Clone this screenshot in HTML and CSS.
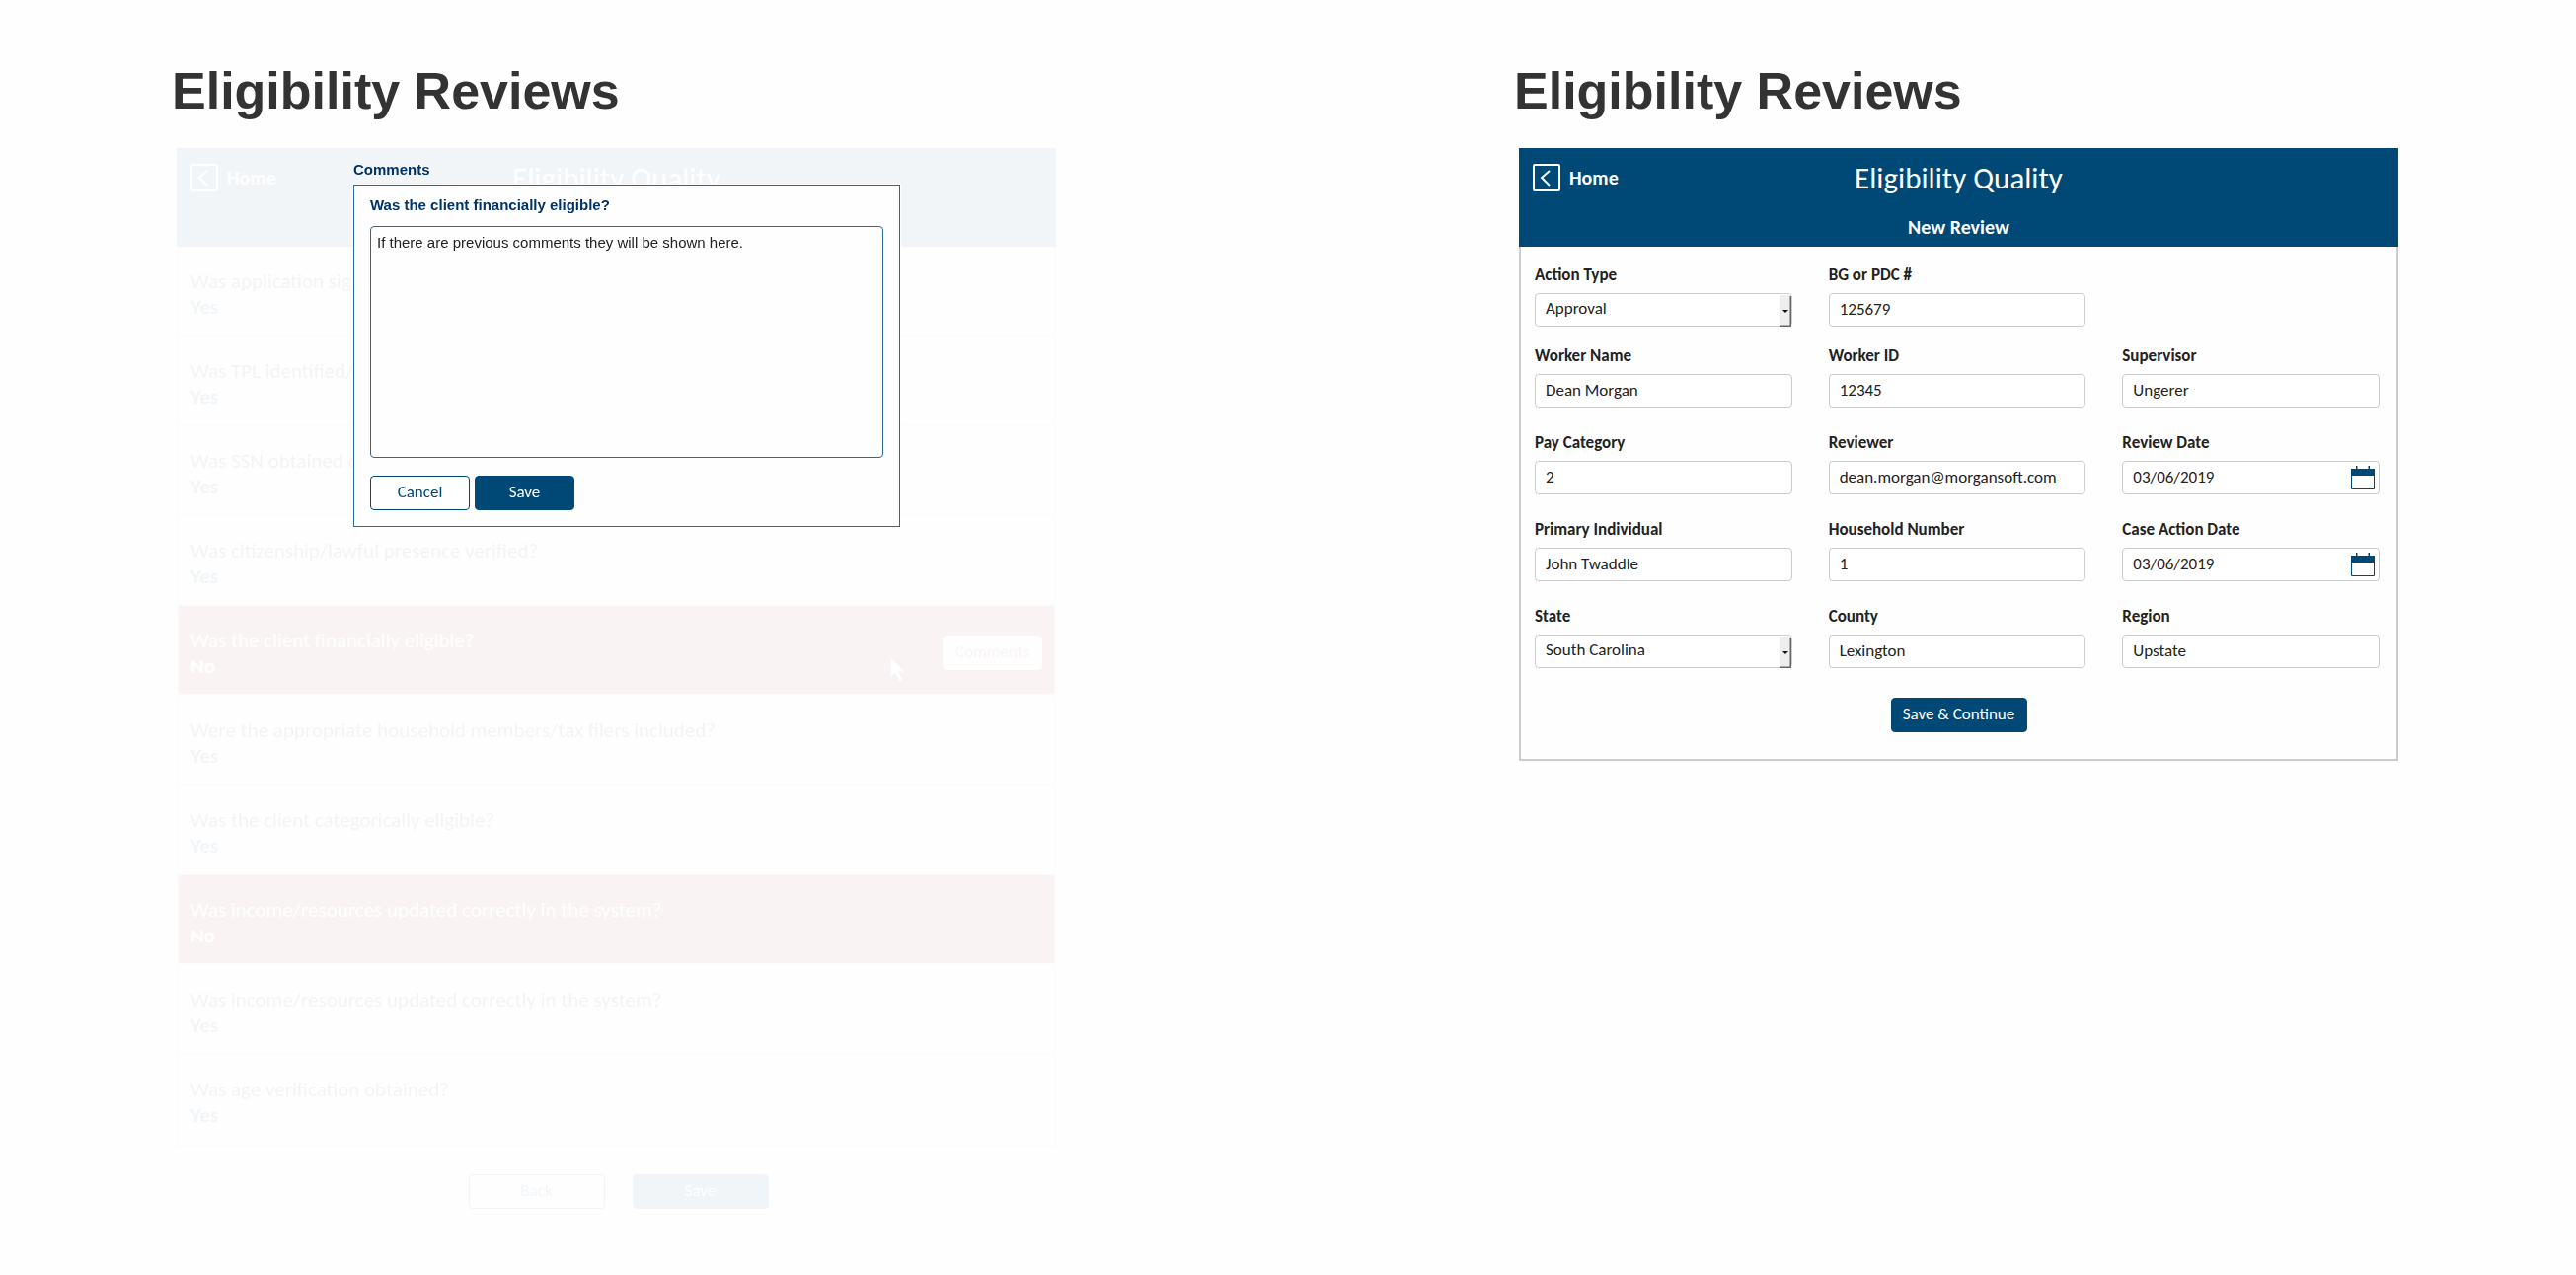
FILE: index.html
```
<!DOCTYPE html>
<html lang="en">
<head>
<meta charset="utf-8">
<title>Eligibility Reviews</title>
<link rel="stylesheet" href="styles.css">
</head>
<body>
<main class="page">
  <section class="column">
    <h1 class="heading">Eligibility Reviews</h1>
    <div class="stage">
      <div class="faded">
        <div class="panel">
          <header class="bar">
            <a class="home" href="#home">
              <svg class="home-icon" viewBox="0 0 28 28" aria-hidden="true"><rect x="1" y="1" width="26" height="26" rx="1"/><path d="M17 7l-8 7 8 8"/></svg>
              Home
            </a>
            <h2 class="bar-title">Eligibility Quality</h2>
          </header>
          <ul class="questions">
            <li class="question"><div><p>Was application signed?</p><strong>Yes</strong></div></li>
            <li class="question"><div><p>Was TPL identified/verified?</p><strong>Yes</strong></div></li>
            <li class="question"><div><p>Was SSN obtained or verified?</p><strong>Yes</strong></div></li>
            <li class="question"><div><p>Was citizenship/lawful presence verified?</p><strong>Yes</strong></div></li>
            <li class="question question-no">
              <div><p>Was the client financially eligible?</p><strong>No</strong></div>
              <svg class="pointer" viewBox="0 0 18 27" aria-hidden="true"><path d="M1 1v22l5-5 4 8 4-2-4-8h7z"/></svg>
              <button class="button button-comments" type="button">Comments</button>
            </li>
            <li class="question"><div><p>Were the appropriate household members/tax filers included?</p><strong>Yes</strong></div></li>
            <li class="question"><div><p>Was the client categorically eligible?</p><strong>Yes</strong></div></li>
            <li class="question question-no"><div><p>Was income/resources updated correctly in the system?</p><strong>No</strong></div></li>
            <li class="question"><div><p>Was income/resources updated correctly in the system?</p><strong>Yes</strong></div></li>
            <li class="question"><div><p>Was age verification obtained?</p><strong>Yes</strong></div></li>
          </ul>
        </div>
        <div class="actions">
          <button class="button button-light button-wide" type="button">Back</button>
          <button class="button button-wide" type="button">Save</button>
        </div>
      </div>
      <div class="modal" role="dialog" aria-labelledby="modal-title">
        <h3 class="modal-title" id="modal-title">Comments</h3>
        <form class="modal-box">
          <label class="modal-label" for="comment">Was the client financially eligible?</label>
          <textarea class="comment" id="comment">If there are previous comments they will be shown here.</textarea>
          <div class="modal-actions">
            <button class="button button-light" type="button">Cancel</button>
            <button class="button" type="button">Save</button>
          </div>
        </form>
      </div>
    </div>
  </section>

  <section class="column">
    <h1 class="heading">Eligibility Reviews</h1>
    <div class="stage">
      <div class="panel panel-form">
        <header class="bar">
          <a class="home" href="#home">
            <svg class="home-icon" viewBox="0 0 28 28" aria-hidden="true"><rect x="1" y="1" width="26" height="26" rx="1"/><path d="M17 7l-8 7 8 8"/></svg>
            Home
          </a>
          <h2 class="bar-title">Eligibility Quality</h2>
          <p class="bar-subtitle">New Review</p>
        </header>
        <form class="form">
          <div class="fields">
            <div class="field">
              <label for="action">Action Type</label>
              <span class="control"><select id="action"><option>Approval</option></select><svg class="drop" viewBox="0 0 12 32" aria-hidden="true"><path class="drop-face" d="M0 0h12v32H0z"/><path class="drop-edge" d="M0 31.500h11.500V1"/><path class="drop-arrow" d="M3 15h6l-3 3z"/></svg></span>
            </div>
            <div class="field">
              <label for="bg">BG or PDC #</label>
              <input id="bg" type="text" value="125679">
            </div>
          </div>
          <div class="fields fields-main">
            <div class="field"><label for="worker">Worker Name</label><input id="worker" type="text" value="Dean Morgan"></div>
            <div class="field"><label for="worker-id">Worker ID</label><input id="worker-id" type="text" value="12345"></div>
            <div class="field"><label for="supervisor">Supervisor</label><input id="supervisor" type="text" value="Ungerer"></div>
            <div class="field"><label for="pay">Pay Category</label><input id="pay" type="text" value="2"></div>
            <div class="field"><label for="reviewer">Reviewer</label><input id="reviewer" type="text" value="dean.morgan@morgansoft.com"></div>
            <div class="field">
              <label for="review-date">Review Date</label>
              <span class="control"><input id="review-date" type="text" value="03/06/2019"><svg class="calendar" viewBox="0 0 24 24" aria-hidden="true"><path class="calendar-frame" d="M.5 4v19.500h23V4"/><path d="M0 3h5V0h1.500v3h11V0H19v3h5v7H0z"/></svg></span>
            </div>
            <div class="field"><label for="individual">Primary Individual</label><input id="individual" type="text" value="John Twaddle"></div>
            <div class="field"><label for="household">Household Number</label><input id="household" type="text" value="1"></div>
            <div class="field">
              <label for="case-date">Case Action Date</label>
              <span class="control"><input id="case-date" type="text" value="03/06/2019"><svg class="calendar" viewBox="0 0 24 24" aria-hidden="true"><path class="calendar-frame" d="M.5 4v19.500h23V4"/><path d="M0 3h5V0h1.500v3h11V0H19v3h5v7H0z"/></svg></span>
            </div>
            <div class="field">
              <label for="state">State</label>
              <span class="control"><select id="state"><option>South Carolina</option></select><svg class="drop" viewBox="0 0 12 32" aria-hidden="true"><path class="drop-face" d="M0 0h12v32H0z"/><path class="drop-edge" d="M0 31.500h11.500V1"/><path class="drop-arrow" d="M3 15h6l-3 3z"/></svg></span>
            </div>
            <div class="field"><label for="county">County</label><input id="county" type="text" value="Lexington"></div>
            <div class="field"><label for="region">Region</label><input id="region" type="text" value="Upstate"></div>
          </div>
          <button class="button button-wide button-submit" type="button">Save &amp; Continue</button>
        </form>
      </div>
    </div>
  </section>
</main>
</body>
</html>
```
FILE: styles.css
```
:root {
  --navy: #004976;
  --line: #cccccc;
  --ui: Calibri, Carlito, Lato, sans-serif;
  --plain: "Liberation Sans", Arial, sans-serif;
}

* {
  box-sizing: border-box;
}

body {
  margin: 0;
  background: #fefefe;
  color: #222222;
  font-family: var(--ui);
  font-size: 17px;
}

h1, h2, h3, p, ul {
  margin: 0;
  padding: 0;
}

.page {
  display: grid;
  grid-template-columns: 1fr 1fr;
  gap: 464px;
  align-items: start;
  padding: 62px 180px 64px 174px;
}

.heading {
  color: #333333;
  font: bold 52px/60px var(--plain);
}

.stage {
  position: relative;
  margin: 28px 0 0 5px;
}

.faded {
  opacity: 0.05;
}

.panel {
  border: 2px solid var(--line);
  border-top: 0;
  background: #fefefe;
}

/* The bar covers the panel's side borders. */
.bar {
  display: grid;
  grid-template-columns: 1fr auto 1fr;
  align-content: start;
  align-items: center;
  row-gap: 12px;
  min-height: 100px;
  margin: 0 -2px;
  padding: 12px 14px 0;
  background: var(--navy);
  color: #ffffff;
}

.home {
  display: flex;
  align-items: center;
  gap: 9px;
  color: inherit;
  font-size: 20px;
  font-weight: bold;
  text-decoration: none;
}

.home-icon {
  width: 28px;
  height: 28px;
  fill: none;
  stroke: currentColor;
  stroke-width: 2;
}

.bar-title {
  font-size: 31px;
  font-weight: normal;
  line-height: 36px;
}

.bar-subtitle {
  grid-column: 1 / -1;
  font-size: 20px;
  font-weight: bold;
  line-height: 40px;
  text-align: center;
}

.questions {
  list-style: none;
}

.question {
  display: flex;
  align-items: center;
  justify-content: flex-end;
  min-height: 91px;
  padding: 6px 12px 0;
  border-bottom: 2px solid var(--line);
  font-size: 21px;
  line-height: 26px;
}

.question:last-child {
  border-bottom-color: transparent;
}

.question div {
  flex: 1;
}

.question strong {
  color: var(--navy);
}

.question-no {
  background: #922525;
}

.question-no, .question-no strong {
  color: #ffffff;
}

.pointer {
  width: 18px;
  height: 27px;
  margin: 34px 36px 0 0;
  fill: #ffffff;
  stroke: #222222;
}

.actions {
  display: flex;
  justify-content: center;
  gap: 28px;
  margin: 28px 0 0 4px;
}

.button {
  min-width: 101px;
  height: 35px;
  padding: 0 8px 2px;
  border: 1px solid var(--navy);
  border-radius: 4px;
  background: var(--navy);
  color: #ffffff;
  font: 17px/20px var(--ui);
}

.button-light {
  background: #ffffff;
  color: var(--navy);
}

.button-comments {
  border-color: #ffffff;
  background: #ffffff;
  color: #922525;
}

.button-wide {
  min-width: 138px;
}

.modal {
  position: absolute;
  top: 12px;
  right: 158px;
  left: 179px;
  font-family: var(--plain);
}

.modal-title {
  color: #003366;
  font-size: 15px;
  line-height: 20px;
}

.modal-box {
  margin-top: 5px;
  padding: 10px 16px 16px;
  border: 1px solid #2b6a92;
  background: #fefefe;
  box-shadow: 0 0 0 1px #fefefe;
}

.modal-label {
  display: block;
  color: #003366;
  font-size: 15px;
  font-weight: bold;
  line-height: 20px;
}

.comment {
  display: block;
  width: 100%;
  height: 235px;
  margin: 11px 0 18px;
  padding: 6px;
  border: 1px solid #2b6a92;
  border-radius: 4px;
  background: #fefefe;
  color: #222222;
  font: 15px/20px var(--plain);
  resize: none;
}

.modal-actions {
  display: flex;
  gap: 5px;
}

.form {
  display: flex;
  flex-direction: column;
  padding: 19px 0 27px;
}

.fields {
  display: grid;
  grid-template-columns: repeat(3, 1fr);
  gap: 26px 37px;
  padding: 0 17px 0 14px;
}

.fields-main {
  margin-top: 20px;
}

.field {
  display: grid;
  gap: 8px;
}

.field label {
  color: #222222;
  font-size: 17px;
  font-weight: bold;
  line-height: 20px;
}

.field input, .field select {
  display: block;
  width: 100%;
  height: 34px;
  padding: 0 10px 2px;
  border: 1px solid var(--line);
  border-radius: 4px;
  background: #ffffff;
  color: #222222;
  font: 17px/20px var(--ui);
  appearance: none;
}

.control {
  position: relative;
  display: block;
}

.drop {
  position: absolute;
  top: 2px;
  right: 1px;
  width: 12px;
  height: 32px;
  pointer-events: none;
}

.drop-face {
  fill: #eeeeee;
}

.drop-edge {
  fill: none;
  stroke: #666666;
  stroke-width: 2;
}

.drop-arrow {
  fill: #111111;
}

.calendar {
  position: absolute;
  top: 5px;
  right: 5px;
  width: 24px;
  height: 24px;
  fill: var(--navy);
}

.calendar-frame {
  fill: none;
  stroke: var(--navy);
}

.button-submit {
  align-self: center;
  margin-top: 30px;
}
```
